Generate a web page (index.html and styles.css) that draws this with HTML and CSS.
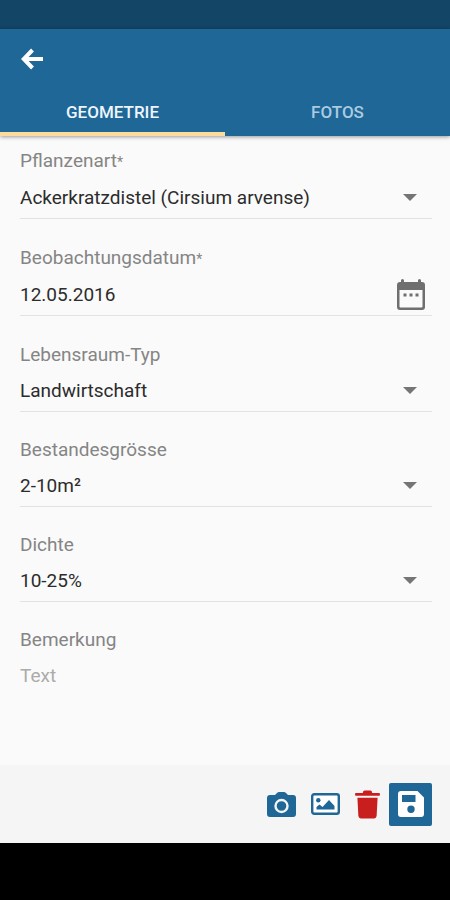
FILE: index.html
```html
<!DOCTYPE html>
<html lang="de">
<head>
    <meta charset="UTF-8">
    <meta name="viewport" content="width=device-width, initial-scale=1.0">
    <title>Beobachtung</title>
    <link rel="stylesheet" href="styles.css">
</head>
<body>
    <div class="statusbar"></div>
    <header class="header">
        <div class="toolbar">
            <button type="button" class="back" aria-label="Zurück">
                <svg viewBox="0 0 22 22" width="22" height="22"><path d="M11.500 2L2.800 11l8.700 9M3 11H22" fill="none" stroke="#fff" stroke-width="4"/></svg>
            </button>
        </div>
        <nav class="tabs">
            <button type="button" class="tab active">GEOMETRIE</button>
            <button type="button" class="tab">FOTOS</button>
        </nav>
    </header>

    <main>
        <form id="form" class="form">
            <div class="field">
                <label for="art">Pflanzenart<span class="req">*</span></label>
                <div class="control">
                    <select id="art"><option>Ackerkratzdistel (Cirsium arvense)</option></select>
                    <span class="caret"></span>
                </div>
            </div>
            <div class="field">
                <label for="datum">Beobachtungsdatum<span class="req">*</span></label>
                <div class="control">
                    <input type="text" id="datum" value="12.05.2016">
                    <button type="button" class="calendar" aria-label="Datum wählen">
                        <svg viewBox="0 0 28 31" width="28" height="31">
                            <path fill="#6f6f6f" fill-rule="evenodd" d="M4 3V1.500Q4 0 5.500 0T7 1.500V3H21V1.500Q21 0 22.500 0T24 1.500V3H25Q28 3 28 6V28Q28 31 25 31H3Q0 31 0 28V6Q0 3 3 3ZM2.500 11V27.500Q2.500 28.500 3.500 28.500H24.500Q25.500 28.500 25.500 27.500V11Z"/>
                            <path fill="#6f6f6f" d="M6.500 14.500h3v3h-3zM12.500 14.500h3v3h-3zM18.500 14.500h3v3h-3z"/>
                        </svg>
                    </button>
                </div>
            </div>
            <div class="field">
                <label for="typ">Lebensraum-Typ</label>
                <div class="control">
                    <select id="typ"><option>Landwirtschaft</option></select>
                    <span class="caret"></span>
                </div>
            </div>
            <div class="field">
                <label for="groesse">Bestandesgrösse</label>
                <div class="control">
                    <select id="groesse"><option>2-10m²</option></select>
                    <span class="caret"></span>
                </div>
            </div>
            <div class="field">
                <label for="dichte">Dichte</label>
                <div class="control">
                    <select id="dichte"><option>10-25%</option></select>
                    <span class="caret"></span>
                </div>
            </div>
            <div class="field">
                <label for="bemerkung">Bemerkung</label>
                <div class="control plain">
                    <input type="text" id="bemerkung" placeholder="Text">
                </div>
            </div>
        </form>
    </main>

    <footer class="actions">
        <button type="button" class="action" aria-label="Foto aufnehmen">
            <svg viewBox="0 0 29 25" width="29" height="25">
                <path fill="#1e6796" d="M3 3H8L10 1Q11 0 12 0H17Q18 0 19 1L21 3H26Q29 3 29 6V22Q29 25 26 25H3Q0 25 0 22V6Q0 3 3 3Z"/>
                <circle cx="14.500" cy="14" r="6" fill="none" stroke="#f5f5f5" stroke-width="2.400"/>
            </svg>
        </button>
        <button type="button" class="action" aria-label="Bild wählen">
            <svg viewBox="0 0 29 22" width="29" height="22">
                <rect x="1.200" y="1.200" width="26.600" height="19.600" rx="2" fill="#fff" stroke="#1e6796" stroke-width="2.400"/>
                <circle cx="7.300" cy="7.300" r="2.200" fill="#1e6796"/>
                <path fill="#1e6796" d="M5.500 16.500V14L8.500 11.500l3 2.500 6.500-7 5.500 6v3.500z"/>
            </svg>
        </button>
        <button type="button" class="action" aria-label="Löschen">
            <svg viewBox="0 0 26 29" width="25" height="29">
                <path fill="#c81e1e" d="M1 2.500H8Q8.500 0 10 0H16Q17.500 0 18 2.500H25Q26 2.500 26 4T25 5.500H1Q0 5.500 0 4T1 2.500ZM2.500 7.500H23.500L22.500 26.500Q22 29 20 29H6Q4 29 3.500 26.500Z"/>
            </svg>
        </button>
        <button type="button" class="action save" aria-label="Speichern">
            <svg viewBox="0 0 26 26" width="26" height="26">
                <path fill="#fff" fill-rule="evenodd" d="M3 0H19.500L26 6.500V23Q26 26 23 26H3Q0 26 0 23V3Q0 0 3 0ZM4 4V11H17.500V4ZM13 14.500A3.700 3.700 0 1 0 13 21.900A3.700 3.700 0 1 0 13 14.500Z"/>
            </svg>
        </button>
    </footer>
    <div class="navbar"></div>
</body>
</html>
```

FILE: styles.css
```css
* {margin: 0; padding: 0; box-sizing: border-box;}
body {
    display: flex;
    flex-direction: column;
    min-height: 100vh;
    font-family: Roboto, "Liberation Sans", sans-serif;
    font-size: 19px;
    color: #2c2c2c;
    background-color: #fafafa;
}
button, input, select {
    font: inherit;
    color: inherit;
    background: none;
    border: 0;
    outline: 0;
}
svg {
    display: block;
}
.statusbar {
    height: 29px;
    background-color: #124566;
}
.header {
    background-color: #1e6796;
    box-shadow: 0 1px 4px rgba(0,0,0,0.4);
}
.toolbar {
    display: flex;
    align-items: center;
    height: 59px;
    padding: 0 21px;
}
.tabs {
    display: flex;
}
.tab {
    flex: 1;
    height: 48px;
    padding-top: 3px;
    border-bottom: 4px solid transparent;
    font-size: 17px;
    font-weight: 500;
    color: #abcbe2;
}
.tab.active {
    color: #eef5fc;
    border-bottom-color: #fbdc9c;
}

/* 입력 폼 */
main {
    flex: 1;
}
.form {
    padding: 11px 18px 0 20px;
}
.field {
    margin-bottom: 24px;
}
.field label {
    display: block;
    line-height: 28px;
    color: #858585;
}
.req {
    font-size: 14px;
}
.control {
    display: flex;
    align-items: center;
    height: 43px;
    border-bottom: 1px solid #e2e2e2;
}
.control.plain {
    border-bottom-color: transparent;
}
.control select,
.control input {
    flex: 1;
    min-width: 0;
    height: 100%;
    appearance: none;
}
.control input::placeholder {
    color: #ababab;
    opacity: 1;
}
.caret {
    margin-right: 15px;
    border: 7px solid transparent;
    border-top-color: #757575;
    border-bottom: 0;
    pointer-events: none;
}
.calendar {
    margin-right: 7px;
}
/* 필수 항목은 간격이 조금 더 넓음 */
.field:has(.req) {
    margin-bottom: 25px;
}

/* 하단 버튼 */
.actions {
    display: flex;
    justify-content: flex-end;
    align-items: center;
    gap: 15px;
    height: 78px;
    padding: 0 18px;
    background-color: #f5f5f5;
}
.save {
    display: flex;
    align-items: center;
    justify-content: center;
    width: 43px;
    height: 43px;
    margin-left: -6px;
    border-radius: 2px;
    background-color: #1e6796;
}
.navbar {
    height: 57px;
    background-color: #000;
}
```
